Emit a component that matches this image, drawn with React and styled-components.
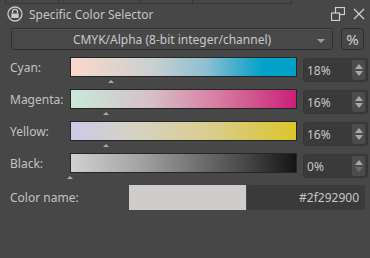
import styled, { createGlobalStyle } from "styled-components";

const Global = createGlobalStyle`
  html, body {
    margin: 0;
    padding: 0;
    background: #474747;
  }
  body {
    font-family: "Noto Sans", "DejaVu Sans", sans-serif;
    color: #c6c6c6;
  }
`;

const Panel = styled.div`
  width: 370px;
  height: 258px;
  background: #474747;
  overflow: hidden;
  display: flex;
  flex-direction: column;
`;

const TopStrip = styled.div`
  height: 4px;
  display: flex;
  padding-left: 5px;
`;

const StripBox = styled.div`
  width: ${(p) => p.w}px;
  border: 1px solid #383838;
  border-top: none;
  border-right: none;
  &:last-child {
    border-right: 1px solid #383838;
  }
`;

const TitleBar = styled.div`
  height: 20px;
  margin-bottom: 4px;
  display: flex;
  align-items: center;
  padding: 0 4px 0 7px;
`;

const Title = styled.span`
  font-size: 12px;
  margin-left: 6px;
  color: #c4c4c4;
  flex: 1;
`;

const TitleButton = styled.button`
  all: unset;
  width: 15px;
  height: 16px;
  display: flex;
  align-items: center;
  justify-content: center;
  margin-left: ${(p) => p.gap || 0}px;
`;

const ComboRow = styled.div`
  display: flex;
  gap: 8px;
  padding: 0 6px 0 11px;
  height: 22px;
`;

const Combo = styled.div`
  flex: 1;
  position: relative;
  border: 1px solid #303030;
  border-radius: 3px;
  background: #484848;
  display: flex;
  align-items: center;
  justify-content: center;
  font-size: 12px;
  color: #c8c8c8;
  box-shadow: inset 0 1px 0 #525252;
`;

const ComboArrow = styled.span`
  position: absolute;
  right: 7px;
  top: 10px;
  border-left: 4px solid transparent;
  border-right: 4px solid transparent;
  border-top: 4px solid #9c9c9c;
`;

const PercentButton = styled.div`
  width: 21px;
  border: 1px solid #303030;
  border-radius: 3px;
  display: flex;
  align-items: center;
  justify-content: center;
  font-size: 15px;
  color: #d0d0d0;
`;

const Rows = styled.div`
  display: flex;
  flex-direction: column;
  padding-top: 7px;
`;

const Row = styled.div`
  display: flex;
  align-items: flex-start;
  height: 32px;
`;

const Label = styled.div`
  width: 60px;
  padding-left: 10px;
  height: 20px;
  line-height: 21px;
  font-size: 12px;
  color: #c2c2c2;
  white-space: nowrap;
`;

const SliderCol = styled.div`
  width: 227px;
  display: flex;
  flex-direction: column;
`;

const Bar = styled.div`
  height: 18px;
  border: 1px solid #262626;
  background: ${(p) => p.gradient};
`;

const MarkerTrack = styled.div`
  position: relative;
  height: 12px;
`;

const Marker = styled.span`
  position: absolute;
  top: 3px;
  margin-left: -3px;
  border-left: 3px solid transparent;
  border-right: 3px solid transparent;
  border-bottom: 3px solid #a8a8a8;
`;

const Spin = styled.div`
  margin-left: 6px;
  margin-top: 1px;
  width: 63px;
  height: 22px;
  border: 1px solid #353535;
  border-radius: 3px;
  background: #3a3a3a;
  display: flex;
  align-items: center;
`;

const SpinText = styled.span`
  flex: 1;
  padding-left: 3px;
  font-size: 12px;
  color: #c6c6c6;
`;

const SpinArrows = styled.div`
  width: 13px;
  height: 20px;
  margin-right: 2px;
  background: #4c4c4c;
  border-radius: 2px;
  display: flex;
  flex-direction: column;
  align-items: center;
  justify-content: center;
  gap: 2px;
`;

const ArrowUp = styled.span`
  border-left: 4px solid transparent;
  border-right: 4px solid transparent;
  border-bottom: 5px solid ${(p) => (p.dim ? "#6a6a6a" : "#a8a8a8")};
`;

const ArrowDown = styled.span`
  border-left: 4px solid transparent;
  border-right: 4px solid transparent;
  border-top: 5px solid ${(p) => (p.dim ? "#6a6a6a" : "#a8a8a8")};
`;

const NameRow = styled.div`
  display: flex;
  align-items: center;
  height: 25px;
`;

const NameLabel = styled.div`
  width: 119px;
  padding-left: 10px;
  font-size: 12px;
  color: #c2c2c2;
`;

const Swatch = styled.div`
  width: 117px;
  height: 25px;
  background: #d0cccb;
`;

const HexField = styled.div`
  margin-left: 1px;
  width: 118px;
  height: 25px;
  box-sizing: border-box;
  background: #3a3a3a;
  border-radius: 2px;
  display: flex;
  align-items: center;
  justify-content: flex-end;
  padding-right: 6px;
  font-size: 12px;
  color: #c6c6c6;
`;

const channels = [
  {
    name: "Cyan:",
    value: 18,
    gradient:
      "linear-gradient(to right, #fcd7ca 0%, #ccd0d1 35%, #8ec0d1 60%, #2aa8cb 78%, #00a2c9 86%, #00a0c8 100%)",
  },
  {
    name: "Magenta:",
    value: 16,
    gradient:
      "linear-gradient(to right, #c9e9d9 0%, #d6c0c8 35%, #d884a6 62%, #d0588f 80%, #cb1f7a 100%)",
  },
  {
    name: "Yellow:",
    value: 16,
    gradient:
      "linear-gradient(to right, #cbcbe9 0%, #d6d2c0 30%, #dacd90 60%, #dac85a 82%, #dbc62a 100%)",
  },
  {
    name: "Black:",
    value: 0,
    gradient:
      "linear-gradient(to right, #d2d0ce 0%, #a6a4a3 30%, #747272 55%, #474545 78%, #171415 100%)",
  },
];

function LockIcon() {
  return (
    <svg width="16" height="16" viewBox="0 0 16 16">
      <circle cx="8" cy="8" r="7" fill="none" stroke="#c8c8c8" strokeWidth="1.3" />
      <path d="M5.5 7.5 V5.8 a2.5 2.5 0 0 1 5 0 V7.5" fill="none" stroke="#c8c8c8" strokeWidth="1.3" />
      <rect x="4.3" y="7.4" width="7.4" height="4.6" rx="0.6" fill="#c8c8c8" />
    </svg>
  );
}

function FloatIcon() {
  return (
    <svg width="14" height="14" viewBox="0 0 14 14">
      <rect x="4.5" y="0.5" width="9" height="7" fill="none" stroke="#d0d0d0" strokeWidth="1.2" />
      <rect x="0.5" y="6" width="8" height="7.5" fill="#474747" stroke="#d0d0d0" strokeWidth="1.2" />
    </svg>
  );
}

function CloseIcon() {
  return (
    <svg width="12" height="12" viewBox="0 0 12 12">
      <path d="M1 1 L11 11 M11 1 L1 11" stroke="#d0d0d0" strokeWidth="1.3" />
    </svg>
  );
}

function ChannelRow({ name, value, gradient }) {
  return (
    <Row>
      <Label>{name}</Label>
      <SliderCol>
        <Bar gradient={gradient} />
        <MarkerTrack>
          <Marker style={{ left: `${(value / 100) * 227}px` }} />
        </MarkerTrack>
      </SliderCol>
      <Spin>
        <SpinText>{value}%</SpinText>
        <SpinArrows>
          <ArrowUp />
          <ArrowDown dim={value === 0} />
        </SpinArrows>
      </Spin>
    </Row>
  );
}

export default function App() {
  return (
    <Panel>
      <Global />
      <TopStrip>
        <StripBox w={52} />
        <StripBox w={81} />
        <StripBox w={51} />
        <StripBox w={98} />
      </TopStrip>
      <TitleBar>
        <LockIcon />
        <Title>Specific Color Selector</Title>
        <TitleButton>
          <FloatIcon />
        </TitleButton>
        <TitleButton gap={6}>
          <CloseIcon />
        </TitleButton>
      </TitleBar>
      <ComboRow>
        <Combo>
          CMYK/Alpha (8-bit integer/channel)
          <ComboArrow />
        </Combo>
        <PercentButton>%</PercentButton>
      </ComboRow>
      <Rows>
        {channels.map((c) => (
          <ChannelRow key={c.name} {...c} />
        ))}
        <NameRow>
          <NameLabel>Color name:</NameLabel>
          <Swatch />
          <HexField>#2f292900</HexField>
        </NameRow>
      </Rows>
    </Panel>
  );
}
